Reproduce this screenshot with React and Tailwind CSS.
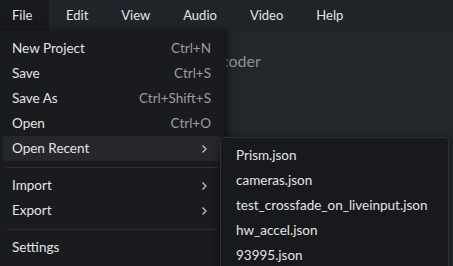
import React from 'react';

const menus = ['File', 'Edit', 'View', 'Audio', 'Video', 'Help'];

const fileItems = [
  { label: 'New Project', shortcut: 'Ctrl+N' },
  { label: 'Save', shortcut: 'Ctrl+S' },
  { label: 'Save As', shortcut: 'Ctrl+Shift+S' },
  { label: 'Open', shortcut: 'Ctrl+O' },
  { label: 'Open Recent', sub: true, active: true },
  { sep: true },
  { label: 'Import', sub: true },
  { label: 'Export', sub: true },
  { sep: true },
  { label: 'Settings' },
];

const recent = ['Prism.json', 'cameras.json', 'test_crossfade_on_liveinput.json', 'hw_accel.json', '93995.json'];

const Chevron = () => (
  <svg width="8" height="10" viewBox="0 0 8 10" fill="none" className="text-[#c8c8c8] mr-[3px]">
    <path d="M2.5 1.5 L6 5 L2.5 8.5" stroke="currentColor" strokeWidth="1.2" />
  </svg>
);

export default function App() {
  return (
    <div
      className="relative w-[453px] h-[266px] overflow-hidden bg-[#23262b] text-[#e4e4e4] text-[13.5px]"
      style={{ fontFamily: 'Lato, "Noto Sans", sans-serif' }}
    >
      {/* Menu bar */}
      <div className="flex h-[31px] items-stretch bg-[#202328] text-[13px]">
        {menus.map((m, i) => (
          <div
            key={m}
            className={`flex items-center px-3 ${i === 0 ? 'bg-[#18191c] w-[49px]' : 'ml-[5px] mr-[4px]'}`}
          >
            {m}
          </div>
        ))}
      </div>

      {/* Main area */}
      <div className="pl-[203px] pt-[18px] text-[16px] text-[#8d8f93]">Encoder</div>

      {/* File dropdown */}
      <div className="absolute left-0 top-[31px] w-[226px] h-[240px] bg-[#1a1b1e] border-r border-[#111214] shadow-[2px_0_6px_rgba(0,0,0,0.5)] pt-[5px]">
        {fileItems.map((it, i) =>
          it.sep ? (
            <div key={i} className="h-[12px] flex items-center px-[7px]">
              <div className="h-px w-full bg-[#2c2e33]" />
            </div>
          ) : (
            <div
              key={i}
              className={`mx-[3px] h-[25px] pl-[9px] pr-[11px] flex items-center justify-between rounded-[4px] ${it.active ? 'bg-[#25272c]' : ''}`}
            >
              <span>{it.label}</span>
              {it.shortcut && <span className="text-[#9c9c9e] text-[13.5px]">{it.shortcut}</span>}
              {it.sub && <Chevron />}
            </div>
          )
        )}
      </div>

      {/* Recent submenu */}
      <div className="absolute left-[220px] top-[137px] w-[229px] h-[140px] bg-[#18191c] border border-[#2c2f34] rounded-[4px] pt-[5px] shadow-[0_2px_8px_rgba(0,0,0,0.5)]">
        {recent.map((r) => (
          <div key={r} className="mx-[3px] h-[25px] px-3 flex items-center">
            {r}
          </div>
        ))}
      </div>
    </div>
  );
}
